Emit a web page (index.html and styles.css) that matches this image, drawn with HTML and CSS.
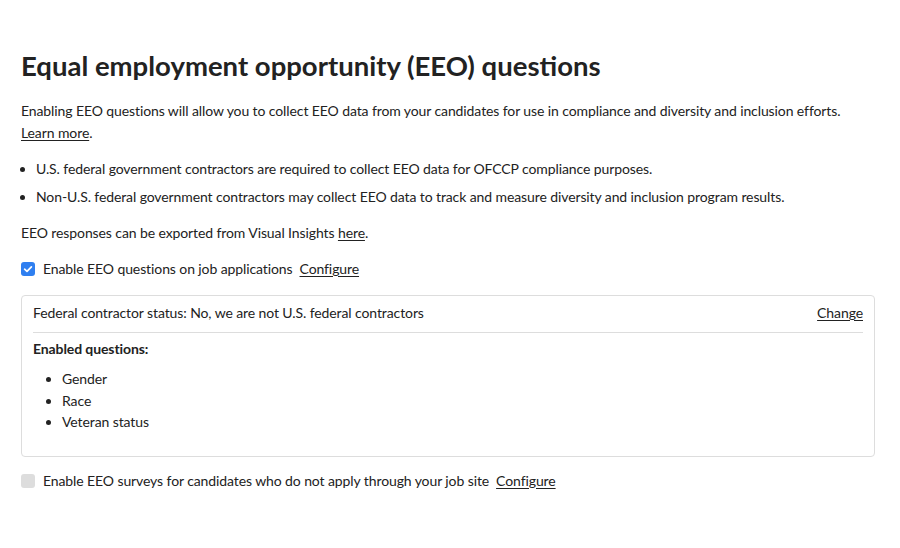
FILE: index.html
```html
<!DOCTYPE html>
<html>
<head>
<meta charset="utf-8">
<link rel="stylesheet" href="styles.css">
</head>
<body>
<main class="page">
  <h1 class="title">Equal employment opportunity (EEO) questions</h1>
  <p class="intro">Enabling EEO questions will allow you to collect EEO data from your candidates for use in compliance and diversity and inclusion efforts.<br><a href="#" class="link">Learn more</a>.</p>
  <ul class="notes">
    <li>U.S. federal government contractors are required to collect EEO data for OFCCP compliance purposes.</li>
    <li>Non-U.S. federal government contractors may collect EEO data to track and measure diversity and inclusion program results.</li>
  </ul>
  <p class="export">EEO responses can be exported from Visual Insights <a href="#" class="link">here</a>.</p>
  <div class="option">
    <span class="check checked"><svg viewBox="0 0 14 14" width="14" height="14"><path d="M3.6 7.2 L6 9.4 L10.4 4.8" fill="none" stroke="#fff" stroke-width="1.7" stroke-linecap="round" stroke-linejoin="round"/></svg></span>
    <span class="label">Enable EEO questions on job applications</span>
    <a href="#" class="link">Configure</a>
  </div>
  <section class="card">
    <div class="card-head">
      <span>Federal contractor status: No, we are not U.S. federal contractors</span>
      <a href="#" class="link">Change</a>
    </div>
    <div class="card-body">
      <div class="card-title">Enabled questions:</div>
      <ul class="questions">
        <li>Gender</li>
        <li>Race</li>
        <li>Veteran status</li>
      </ul>
    </div>
  </section>
  <div class="option">
    <span class="check"></span>
    <span class="label">Enable EEO surveys for candidates who do not apply through your job site</span>
    <a href="#" class="link">Configure</a>
  </div>
</main>
</body>
</html>
```
FILE: styles.css
```css
html, body { margin: 0; padding: 0; background: #fff; }
body {
  font-family: Lato, "Liberation Sans", sans-serif;
  font-size: 14px;
  letter-spacing: -0.1px;
  color: #222;
}
.page {
  width: 854px;
  padding: 48px 21px 0 21px;
}
.title {
  margin: 0 0 16px 0;
  font-size: 27.5px;
  line-height: 36px;
  font-weight: 700;
  letter-spacing: 0;
  color: #222;
}
.intro {
  margin: 0 0 14px 0;
  line-height: 22px;
}
.link { color: #222; text-decoration: underline; text-underline-offset: 2px; }
.notes {
  margin: 0 0 14px 0;
  padding-left: 15px;
  line-height: 22px;
}
.notes li { margin-bottom: 6px; }
.notes li:last-child { margin-bottom: 0; }
.export { margin: 0 0 14px 0; line-height: 22px; }
.option {
  display: flex;
  align-items: center;
  line-height: 22px;
}
.check {
  width: 14px;
  height: 14px;
  border-radius: 3px;
  background: #ddd;
  margin-right: 8px;
  display: flex;
}
.check.checked { background: #2f7ff0; }
.label { margin-right: 7px; }
.card {
  margin: 15px 0 13px 0;
  border: 1px solid #ddd;
  border-radius: 4px;
  padding: 6px 11px 23px 11px;
}
.card-head {
  display: flex;
  justify-content: space-between;
  line-height: 22px;
  padding-bottom: 8px;
  border-bottom: 1px solid #ddd;
}
.card-body { padding-top: 5px; }
.card-title { font-weight: 700; line-height: 22px; }
.questions {
  margin: 8px 0 0 0;
  padding-left: 29px;
  line-height: 21.5px;
}
```
